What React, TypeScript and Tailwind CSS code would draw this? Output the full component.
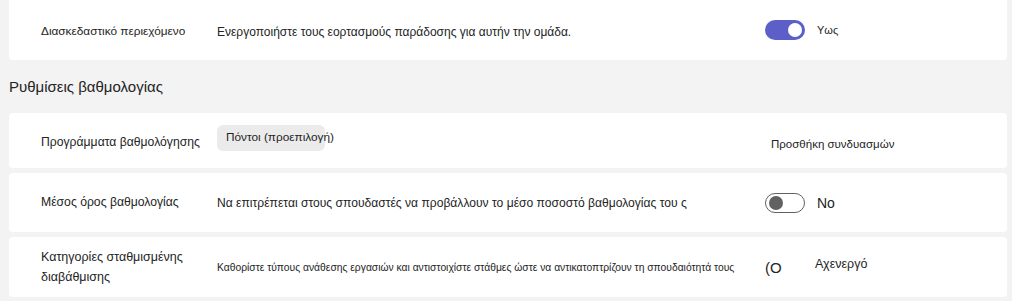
import React from 'react'

function Toggle({ on }: { on: boolean }) {
  return on ? (
    <div className="flex h-[20px] w-[40px] items-center justify-end rounded-full bg-[#5b5fc7] pr-[3px]">
      <div className="h-[14px] w-[14px] rounded-full bg-white" />
    </div>
  ) : (
    <div className="flex h-[20px] w-[40px] items-center rounded-full border border-[#616161] bg-white pl-[3px]">
      <div className="h-[14px] w-[14px] rounded-full bg-[#616161]" />
    </div>
  )
}

export default function App() {
  return (
    <div
      className="h-[301px] w-[1012px] overflow-hidden bg-[#f3f3f3] text-[#242424]"
      style={{ fontFamily: '"Liberation Sans", "Noto Sans", sans-serif' }}
    >
      <div className="flex flex-col pl-[9px] pr-[5px]">
        {/* Ψυχαγωγία */}
        <div className="flex h-[60px] items-center rounded-b-[4px] bg-white pl-[32px]">
          <div className="w-[176px] pt-[4px] text-[11.8px]">Διασκεδαστικό περιεχόμενο</div>
          <div className="w-[548px] pt-[4px] text-[12px]">Ενεργοποιήστε τους εορτασμούς παράδοσης για αυτήν την ομάδα.</div>
          <Toggle on />
          <div className="pl-[12px] text-[11px]">Υως</div>
        </div>

        <div className="flex h-[53px] items-center pt-[2px] text-[15px]">Ρυθμίσεις βαθμολογίας</div>

        <div className="flex flex-col gap-[5px]">
          <div className="flex h-[55px] rounded-[4px] bg-white pl-[32px]">
            <div className="w-[176px] pt-[20px] text-[12.2px]">Προγράμματα βαθμολόγησης</div>
            <div className="w-[554px] pt-[12px]">
              <div className="flex h-[26px] w-[108px] items-start whitespace-nowrap rounded-[6px] bg-[#ebebeb] pl-[9px] pt-[4px] text-[11.8px]">
                Πόντοι (προεπιλογή)
              </div>
            </div>
            <div className="pt-[23px] text-[11.5px]">Προσθήκη συνδυασμών</div>
          </div>

          <div className="flex h-[59px] items-center rounded-[4px] bg-white pl-[32px]">
            <div className="w-[176px] text-[12.2px]">Μέσος όρος βαθμολογίας</div>
            <div className="w-[548px] pt-[2px] text-[12.1px]">
              Να επιτρέπεται στους σπουδαστές να προβάλλουν το μέσο ποσοστό βαθμολογίας του ς
            </div>
            <Toggle on={false} />
            <div className="pl-[12px] pt-[1px] text-[14px]">No</div>
          </div>

          <div className="flex h-[60px] items-center rounded-[4px] bg-white pl-[32px]">
            <div className="w-[176px] text-[12.5px] leading-[20px]">
              Κατηγορίες σταθμισμένης
              <br />
              διαβάθμισης
            </div>
            <div className="w-[548px] pt-[2px] text-[10.3px]">
              Καθορίστε τύπους ανάθεσης εργασιών και αντιστοιχίστε στάθμες ώστε να αντικατοπτρίζουν τη σπουδαιότητά τους
            </div>
            <div className="w-[50px] pt-[2px] text-[15px]">(O</div>
            <div className="pb-[6px] text-[12.5px]">Αχενεργό</div>
          </div>
        </div>
      </div>
    </div>
  )
}
